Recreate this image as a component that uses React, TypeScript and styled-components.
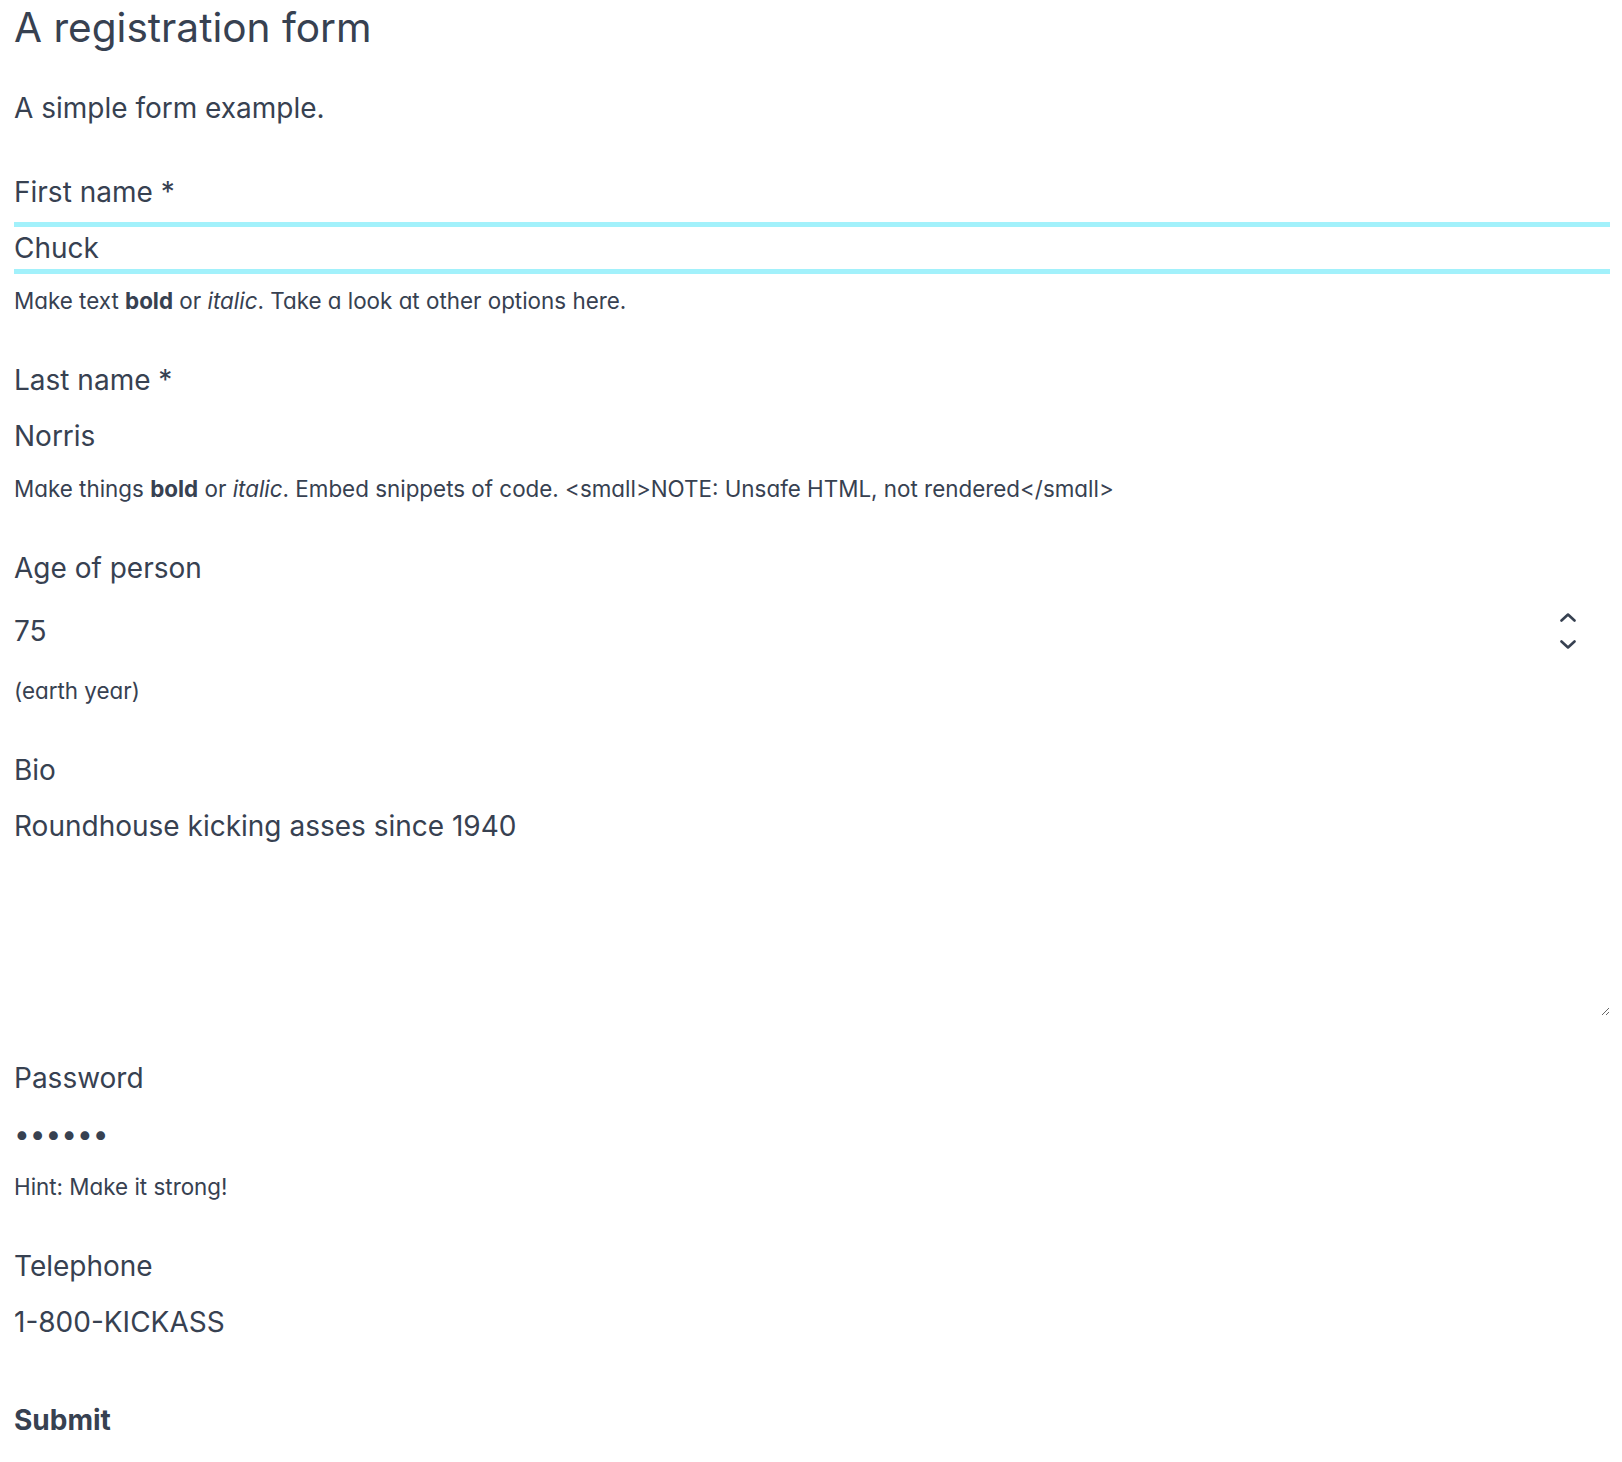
import React from "react";
import styled, { createGlobalStyle } from "styled-components";

const GlobalStyle = createGlobalStyle`
  html, body {
    margin: 0;
    padding: 0;
    background: #ffffff;
  }
  body {
    font-family: Inter, "Noto Sans", sans-serif;
    color: #374151;
  }
`;

const Page = styled.div`
  padding: 3px 12px 60px 14px;
`;

const Title = styled.h1`
  margin: 0;
  font-size: 40.6px;
  line-height: 50px;
  font-weight: 400;
`;

const Description = styled.p`
  margin: 34px 0 0;
  font-size: 28px;
  line-height: 42px;
`;

const Form = styled.form`
  display: flex;
  flex-direction: column;
  margin-top: 42px;
`;

const Field = styled.div<{ $last?: boolean }>`
  display: flex;
  flex-direction: column;
  margin-bottom: ${(p) => (p.$last ? "0" : "42px")};
`;

const Label = styled.label`
  font-size: 28px;
  line-height: 42px;
  margin-bottom: 9px;
`;

const inputBase = `
  display: block;
  width: 100%;
  box-sizing: border-box;
  margin: 0;
  padding: 0;
  border: 0;
  border-top: 5px solid transparent;
  border-bottom: 5px solid transparent;
  background: transparent;
  font-family: Inter, "Noto Sans", sans-serif;
  font-size: 28px;
  line-height: 42px;
  color: #374151;
  outline: none;
`;

const TextInput = styled.input<{ $focused?: boolean }>`
  ${inputBase}
  height: 52px;
  border-color: ${(p) => (p.$focused ? "#a2f1fb" : "transparent")};
`;

const NumberBox = styled.div`
  display: flex;
  align-items: center;
  height: 66px;
  box-sizing: border-box;
  border-top: 5px solid transparent;
  border-bottom: 5px solid transparent;
  padding-right: 34px;
`;

const NumberInput = styled.input`
  ${inputBase}
  flex: 1;
  border: 0;
  height: 42px;
  -moz-appearance: textfield;
  &::-webkit-inner-spin-button,
  &::-webkit-outer-spin-button {
    -webkit-appearance: none;
    margin: 0;
  }
`;

const Spinner = styled.span`
  display: flex;
  flex-direction: column;
  gap: 18px;
  align-items: center;
  width: 16px;
`;

const TextArea = styled.textarea`
  ${inputBase}
  height: 221px;
  resize: vertical;
  margin-bottom: -6px;
`;

const Help = styled.small`
  display: block;
  margin: 9px 0 -1px;
  font-size: 22.4px;
  line-height: 35px;
  font-feature-settings: "cv11";
  b {
    font-weight: 700;
  }
`;

const SubmitButton = styled.button`
  align-self: flex-start;
  margin-top: 51px;
  padding: 0;
  border: 0;
  background: none;
  font-family: Inter, "Noto Sans", sans-serif;
  font-size: 28px;
  line-height: 42px;
  font-weight: 700;
  color: #374151;
  cursor: pointer;
`;

const Chevron: React.FC<{ up?: boolean }> = ({ up }) => (
  <svg width="16" height="9" viewBox="0 0 16 9">
    <path
      d={up ? "M1.5 7.5 L8 1.5 L14.5 7.5" : "M1.5 1.5 L8 7.5 L14.5 1.5"}
      fill="none"
      stroke="#374151"
      strokeWidth="2.6"
      strokeLinecap="round"
      strokeLinejoin="round"
    />
  </svg>
);

const App: React.FC = () => {
  return (
    <>
      <GlobalStyle />
      <Page>
        <Title>A registration form</Title>
        <Description>A simple form example.</Description>

        <Form onSubmit={(e) => e.preventDefault()}>
          <Field>
            <Label htmlFor="firstName">First name *</Label>
            <TextInput id="firstName" $focused defaultValue="Chuck" />
            <Help>
              Make text <b>bold</b> or <i>italic</i>. Take a look at other options here.
            </Help>
          </Field>

          <Field>
            <Label htmlFor="lastName">Last name *</Label>
            <TextInput id="lastName" defaultValue="Norris" />
            <Help>
              Make things <b>bold</b> or <i>italic</i>. Embed snippets of code.{" "}
              {"<small>NOTE: Unsafe HTML, not rendered</small>"}
            </Help>
          </Field>

          <Field>
            <Label htmlFor="age">Age of person</Label>
            <NumberBox>
              <NumberInput id="age" type="number" defaultValue={75} />
              <Spinner>
                <Chevron up />
                <Chevron />
              </Spinner>
            </NumberBox>
            <Help>(earth year)</Help>
          </Field>

          <Field>
            <Label htmlFor="bio">Bio</Label>
            <TextArea id="bio" defaultValue="Roundhouse kicking asses since 1940" />
          </Field>

          <Field>
            <Label htmlFor="password">Password</Label>
            <TextInput id="password" type="password" defaultValue="noneya" />
            <Help>Hint: Make it strong!</Help>
          </Field>

          <Field $last>
            <Label htmlFor="telephone">Telephone</Label>
            <TextInput id="telephone" type="tel" defaultValue="1-800-KICKASS" />
          </Field>

          <SubmitButton type="submit">Submit</SubmitButton>
        </Form>
      </Page>
    </>
  );
};

export default App;
